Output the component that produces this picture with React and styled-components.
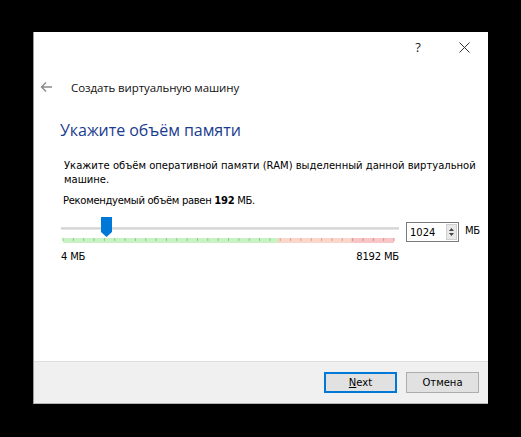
import React from "react";
import styled, { createGlobalStyle } from "styled-components";

const GlobalStyle = createGlobalStyle`
  html, body {
    margin: 0;
    padding: 0;
    background: #000;
  }
  body {
    font-family: "Liberation Sans", Arial, sans-serif;
  }
`;

const Page = styled.div`
  width: 521px;
  height: 437px;
  padding: 32px 0 0 33px;
  box-sizing: border-box;
  background: #000;
`;

const Dialog = styled.div`
  width: 455px;
  height: 372px;
  background: #fff;
  display: flex;
  flex-direction: column;
  box-sizing: border-box;
  border-left: 1px solid #9a9a9a;
  border-bottom: 1px solid #b5b5b5;
`;

const TitleBar = styled.div`
  height: 30px;
  display: flex;
  align-items: center;
  justify-content: flex-end;
  padding-right: 16px;
  gap: 30px;
  color: #222;
`;

const TitleButton = styled.span`
  width: 16px;
  display: flex;
  justify-content: center;
  font-family: "Open Sans", sans-serif;
  font-size: 13px;
`;

const NavRow = styled.div`
  height: 30px;
  margin-top: 10px;
  display: flex;
  align-items: center;
  padding-left: 6px;
  gap: 18px;
`;

const NavTitle = styled.span`
  font-family: "Open Sans", sans-serif;
  font-size: 11.5px;
  color: #111;
  letter-spacing: -0.1px;
`;

const Content = styled.div`
  flex: 1;
  padding: 0 0 0 26px;
`;

const Heading = styled.h1`
  margin: 17px 0 0 0;
  font-family: "Open Sans", sans-serif;
  font-weight: normal;
  font-size: 16px;
  line-height: 22px;
  color: #1a3c8f;
  letter-spacing: -0.05px;
`;

const Text = styled.p`
  margin: ${(p) => p.$mt}px 0 0 ${(p) => p.$ml || 3}px;
  font-family: "DejaVu Sans", sans-serif;
  font-size: 10px;
  line-height: 14px;
  color: #000;
  width: 420px;
  letter-spacing: ${(p) => p.$ls || 0}px;
  b {
    font-weight: bold;
  }
`;

const SliderRow = styled.div`
  margin-top: 9px;
  margin-left: 1px;
  display: flex;
  align-items: flex-start;
  gap: 7px;
`;

const SpinBox = styled.div`
  margin-top: 5px;
  width: 53px;
  height: 20px;
  box-sizing: border-box;
  border: 1px solid #7a7a7a;
  display: flex;
  align-items: center;
  justify-content: space-between;
  padding: 0 1px 0 3px;
  font-family: "DejaVu Sans", sans-serif;
  font-size: 10px;
`;

const SpinButtons = styled.div`
  width: 11px;
  height: 16px;
  background: #e8e8e8;
  border: 1px solid #cfcfcf;
  box-sizing: border-box;
  display: flex;
  align-items: center;
  justify-content: center;
`;

const Unit = styled.span`
  margin-top: 8px;
  margin-left: -1px;
  font-family: "DejaVu Sans", sans-serif;
  font-size: 10px;
  letter-spacing: -0.3px;
`;

const Labels = styled.div`
  width: 338px;
  margin-top: 7px;
  margin-left: 1px;
  display: flex;
  justify-content: space-between;
  font-family: "DejaVu Sans", sans-serif;
  font-size: 10px;
  line-height: 14px;
  letter-spacing: -0.2px;
`;

const Footer = styled.div`
  height: 42px;
  box-sizing: border-box;
  background: #f0f0f0;
  border-top: 1px solid #dfdfdf;
  display: flex;
  align-items: center;
  justify-content: flex-end;
  padding-right: 9px;
  gap: 9px;
`;

const Button = styled.button`
  width: 73px;
  height: 21px;
  box-sizing: border-box;
  background: #e1e1e1;
  border: ${(p) => (p.$default ? "2px solid #0078d7" : "1px solid #adadad")};
  font-family: "DejaVu Sans", sans-serif;
  font-size: 10px;
  color: #000;
  padding: 0;
  u {
    text-decoration: underline;
  }
`;

const Slider = () => {
  const w = 338;
  const x0 = 2;
  const x1 = 333;
  const n = 32;
  const step = (x1 - x0) / n;
  const ticks = [];
  for (let i = 0; i <= n; i++) {
    const x = x0 + i * step;
    const col = x < 217 ? "#8fc98a" : x < 290 ? "#e0a08f" : "#d98f8f";
    ticks.push(
      <line key={i} x1={x} y1={21} x2={x} y2={24} stroke={col} strokeWidth="1" />
    );
  }
  return (
    <svg width={w} height="26" viewBox={`0 0 ${w} 26`}>
      <rect x="0" y="10" width={w} height="3" fill="#e6e6e6" />
      <rect x="0" y="10.5" width={w} height="1.5" fill="#d4d4d4" />
      <rect x={x0} y="21" width={217 - x0} height="5" fill="#c9f2c4" />
      <rect x="217" y="21" width="73" height="5" fill="#fbd6cb" />
      <rect x="290" y="21" width={x1 - 290} height="5" fill="#f8c6c6" />
      {ticks}
      <path d="M40 0 H51 V15 L45.5 20 L40 15 Z" fill="#0078d7" />
    </svg>
  );
};

const ArrowLeft = () => (
  <svg width="13" height="12" viewBox="0 0 13 12">
    <path d="M12 6 H1.5 M6 1.5 L1.5 6 L6 10.5" fill="none" stroke="#8a8a8a" strokeWidth="1.4" />
  </svg>
);

const CloseIcon = () => (
  <svg width="11" height="11" viewBox="0 0 11 11">
    <path d="M0.5 0.5 L10.5 10.5 M10.5 0.5 L0.5 10.5" stroke="#333" strokeWidth="1" />
  </svg>
);

const SpinArrows = () => (
  <svg width="7" height="12" viewBox="0 0 7 12">
    <path d="M3.5 2 L6 5 H1 Z" fill="#444" />
    <path d="M3.5 10 L6 7 H1 Z" fill="#444" />
  </svg>
);

export default function App() {
  return (
    <>
      <GlobalStyle />
      <Page>
        <Dialog>
          <TitleBar>
            <TitleButton>?</TitleButton>
            <TitleButton>
              <CloseIcon />
            </TitleButton>
          </TitleBar>
          <NavRow>
            <ArrowLeft />
            <NavTitle>Создать виртуальную машину</NavTitle>
          </NavRow>
          <Content>
            <Heading>Укажите объём памяти</Heading>
            <Text $mt={18} $ml={4}>
              Укажите объём оперативной памяти (RAM) выделенный данной виртуальной машине.
            </Text>
            <Text $mt={7} $ls={-0.3}>
              Рекомендуемый объём равен <b>192</b> МБ.
            </Text>
            <SliderRow>
              <Slider />
              <SpinBox>
                <span>1024</span>
                <SpinButtons>
                  <SpinArrows />
                </SpinButtons>
              </SpinBox>
              <Unit>МБ</Unit>
            </SliderRow>
            <Labels>
              <span>4 МБ</span>
              <span>8192 МБ</span>
            </Labels>
          </Content>
          <Footer>
            <Button $default>
              <u>N</u>ext
            </Button>
            <Button>Отмена</Button>
          </Footer>
        </Dialog>
      </Page>
    </>
  );
}
